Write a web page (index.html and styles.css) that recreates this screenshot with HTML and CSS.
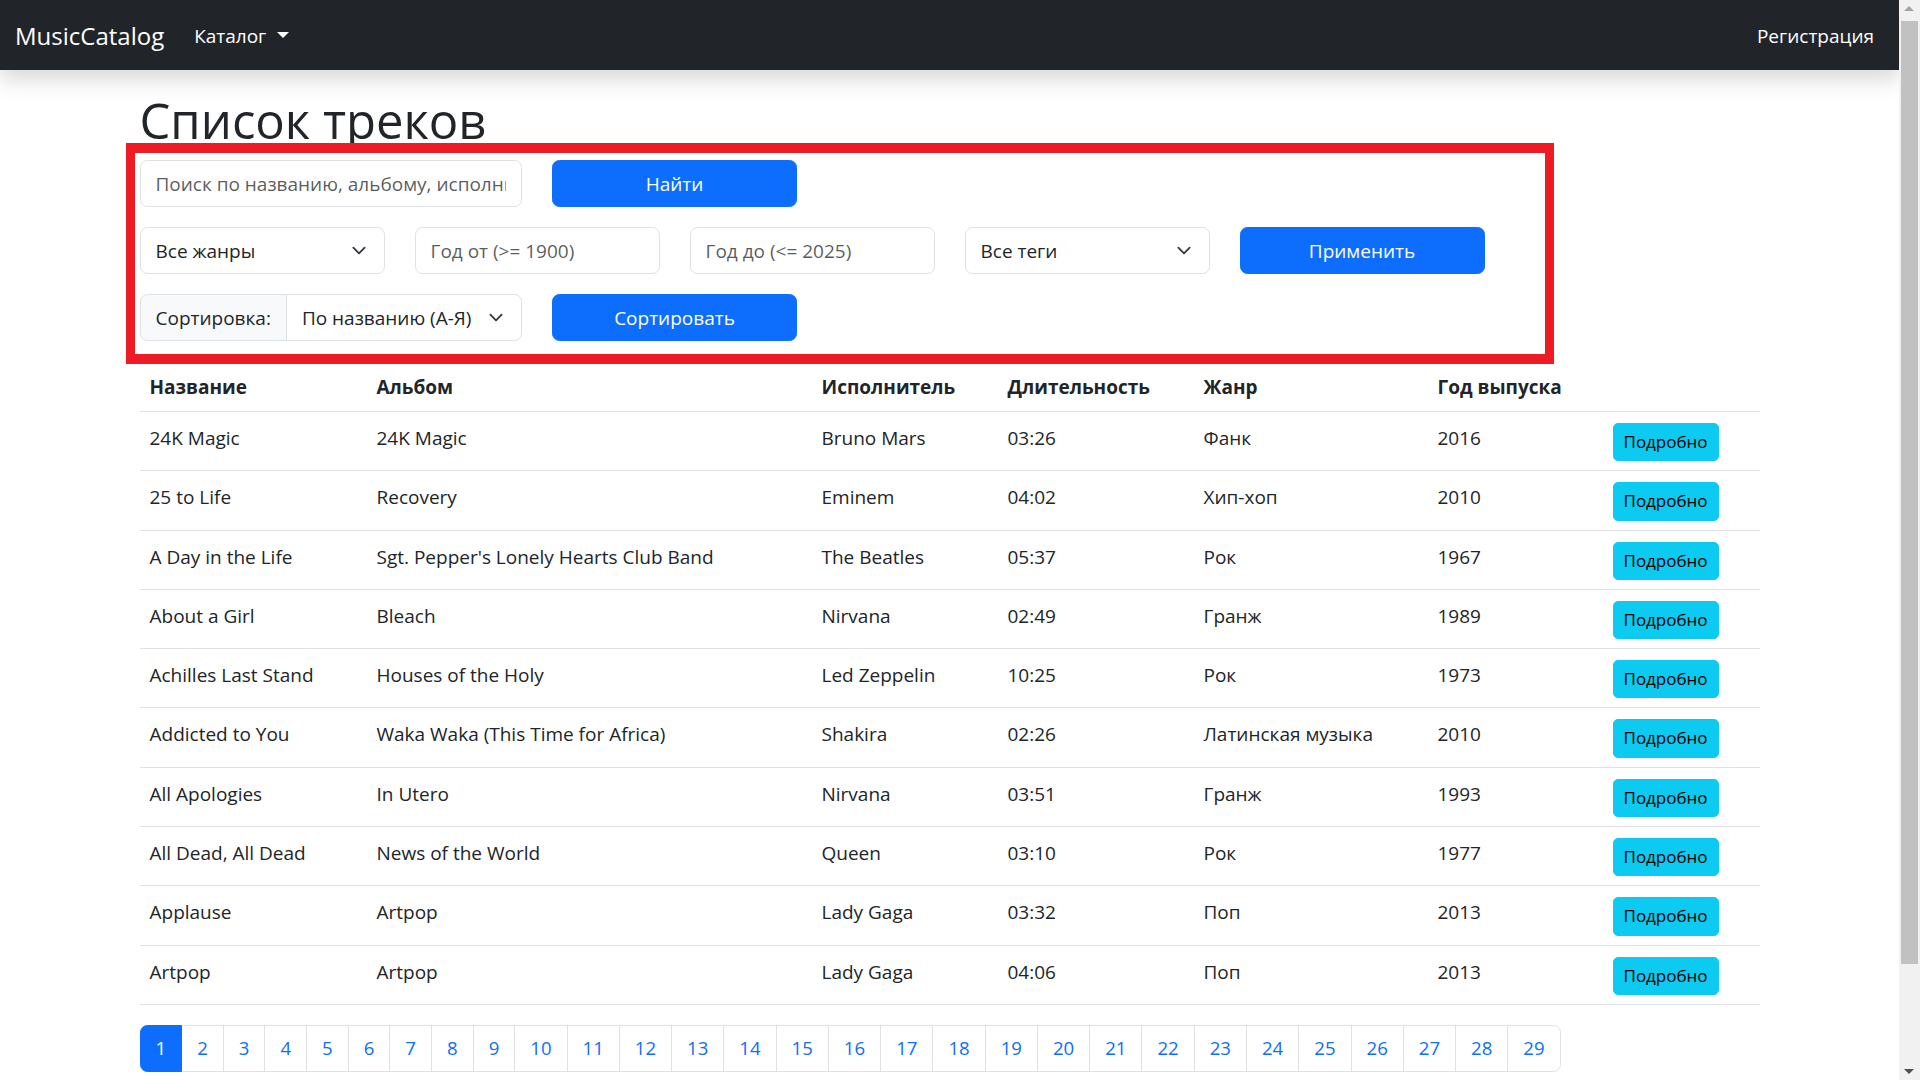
FILE: index.html
```html
<!DOCTYPE html>
<html lang="ru">
<head>
<meta charset="utf-8">
<title>Список треков - MusicCatalog</title>
<link rel="stylesheet" href="styles.css">
</head>
<body>
<nav class="navbar">
  <div class="navbar-inner">
    <a class="brand" href="#">MusicCatalog</a>
    <ul class="nav">
      <li><a class="nav-link dropdown-toggle" href="#">Каталог</a></li>
    </ul>
    <ul class="nav nav-right">
      <li><a class="nav-link" href="#">Регистрация</a></li>
    </ul>
  </div>
</nav>

<main class="container">
  <h1 class="page-title">Список треков</h1>

  <form class="filters">
    <div class="frow">
      <div class="span-3"><input class="form-control" type="text" placeholder="Поиск по названию, альбому, исполнителю..."></div>
      <div class="span-2"><button class="btn btn-primary" type="button">Найти</button></div>
    </div>
    <div class="frow">
      <div class="span-2">
        <div class="form-select"><span>Все жанры</span><svg class="chev" viewBox="0 0 16 16"><path d="m2 5 6 6 6-6"/></svg></div>
      </div>
      <div class="span-2"><input class="form-control" type="text" placeholder="Год от (>= 1900)"></div>
      <div class="span-2"><input class="form-control" type="text" placeholder="Год до (<= 2025)"></div>
      <div class="span-2">
        <div class="form-select"><span>Все теги</span><svg class="chev" viewBox="0 0 16 16"><path d="m2 5 6 6 6-6"/></svg></div>
      </div>
      <div class="span-2"><button class="btn btn-primary" type="button">Применить</button></div>
    </div>
    <div class="frow">
      <div class="span-3">
        <div class="input-group">
          <span class="input-group-text">Сортировка:</span>
          <div class="form-select grouped"><span>По названию (А-Я)</span><svg class="chev" viewBox="0 0 16 16"><path d="m2 5 6 6 6-6"/></svg></div>
        </div>
      </div>
      <div class="span-2"><button class="btn btn-primary" type="button">Сортировать</button></div>
    </div>
  </form>

  <table class="table">
    <colgroup>
      <col class="c-name"><col class="c-album"><col class="c-artist"><col class="c-dur"><col class="c-genre"><col class="c-year"><col class="c-act">
    </colgroup>
    <thead>
      <tr><th>Название</th><th>Альбом</th><th>Исполнитель</th><th>Длительность</th><th>Жанр</th><th>Год выпуска</th><th></th></tr>
    </thead>
    <tbody>
      <tr><td>24K Magic</td><td>24K Magic</td><td>Bruno Mars</td><td>03:26</td><td>Фанк</td><td>2016</td><td><a class="btn-sm" href="#">Подробно</a></td></tr>
      <tr><td>25 to Life</td><td>Recovery</td><td>Eminem</td><td>04:02</td><td>Хип-хоп</td><td>2010</td><td><a class="btn-sm" href="#">Подробно</a></td></tr>
      <tr><td>A Day in the Life</td><td>Sgt. Pepper's Lonely Hearts Club Band</td><td>The Beatles</td><td>05:37</td><td>Рок</td><td>1967</td><td><a class="btn-sm" href="#">Подробно</a></td></tr>
      <tr><td>About a Girl</td><td>Bleach</td><td>Nirvana</td><td>02:49</td><td>Гранж</td><td>1989</td><td><a class="btn-sm" href="#">Подробно</a></td></tr>
      <tr><td>Achilles Last Stand</td><td>Houses of the Holy</td><td>Led Zeppelin</td><td>10:25</td><td>Рок</td><td>1973</td><td><a class="btn-sm" href="#">Подробно</a></td></tr>
      <tr><td>Addicted to You</td><td>Waka Waka (This Time for Africa)</td><td>Shakira</td><td>02:26</td><td>Латинская музыка</td><td>2010</td><td><a class="btn-sm" href="#">Подробно</a></td></tr>
      <tr><td>All Apologies</td><td>In Utero</td><td>Nirvana</td><td>03:51</td><td>Гранж</td><td>1993</td><td><a class="btn-sm" href="#">Подробно</a></td></tr>
      <tr><td>All Dead, All Dead</td><td>News of the World</td><td>Queen</td><td>03:10</td><td>Рок</td><td>1977</td><td><a class="btn-sm" href="#">Подробно</a></td></tr>
      <tr><td>Applause</td><td>Artpop</td><td>Lady Gaga</td><td>03:32</td><td>Поп</td><td>2013</td><td><a class="btn-sm" href="#">Подробно</a></td></tr>
      <tr><td>Artpop</td><td>Artpop</td><td>Lady Gaga</td><td>04:06</td><td>Поп</td><td>2013</td><td><a class="btn-sm" href="#">Подробно</a></td></tr>
    </tbody>
  </table>

  <ul class="pagination">
    <li><a class="page-link active" href="#">1</a></li>
    <li><a class="page-link" href="#">2</a></li>
    <li><a class="page-link" href="#">3</a></li>
    <li><a class="page-link" href="#">4</a></li>
    <li><a class="page-link" href="#">5</a></li>
    <li><a class="page-link" href="#">6</a></li>
    <li><a class="page-link" href="#">7</a></li>
    <li><a class="page-link" href="#">8</a></li>
    <li><a class="page-link" href="#">9</a></li>
    <li><a class="page-link" href="#">10</a></li>
    <li><a class="page-link" href="#">11</a></li>
    <li><a class="page-link" href="#">12</a></li>
    <li><a class="page-link" href="#">13</a></li>
    <li><a class="page-link" href="#">14</a></li>
    <li><a class="page-link" href="#">15</a></li>
    <li><a class="page-link" href="#">16</a></li>
    <li><a class="page-link" href="#">17</a></li>
    <li><a class="page-link" href="#">18</a></li>
    <li><a class="page-link" href="#">19</a></li>
    <li><a class="page-link" href="#">20</a></li>
    <li><a class="page-link" href="#">21</a></li>
    <li><a class="page-link" href="#">22</a></li>
    <li><a class="page-link" href="#">23</a></li>
    <li><a class="page-link" href="#">24</a></li>
    <li><a class="page-link" href="#">25</a></li>
    <li><a class="page-link" href="#">26</a></li>
    <li><a class="page-link" href="#">27</a></li>
    <li><a class="page-link" href="#">28</a></li>
    <li><a class="page-link" href="#">29</a></li>
  </ul>
</main>

<div class="annotation"></div>

<div class="scrollbar">
  <span class="sb-arrow sb-up"></span>
  <span class="sb-thumb"></span>
  <span class="sb-arrow sb-down"></span>
</div>
</body>
</html>
```

FILE: styles.css
```css
* { box-sizing: border-box; }

html { overflow: hidden; }

body {
  margin: 0;
  padding-right: 21px;
  font-family: "Open Sans", "Noto Sans", "Liberation Sans", sans-serif;
  font-size: 19px;
  line-height: 30px;
  color: #212529;
  background: #fff;
}

a { text-decoration: none; }

/* Navbar */
.navbar {
  position: relative;
  z-index: 2;
  background: #212529;
  box-shadow: 0 10px 20px rgba(0, 0, 0, 0.15);
}
.navbar-inner {
  display: flex;
  align-items: center;
  height: 70px;
  padding: 0 15px;
}
.brand {
  color: #fff;
  font-size: 24px;
  line-height: 37.5px;
  margin-right: 20px;
  padding-top: 2px;
}
.nav {
  display: flex;
  list-style: none;
  margin: 0;
  padding: 0;
}
.nav-right { margin-left: auto; }
.nav-link {
  display: block;
  color: #fff;
  padding: 11px 10px 9px;
  font-size: 19px;
  line-height: 30px;
}
.dropdown-toggle::after {
  content: "";
  display: inline-block;
  margin-left: 11px;
  vertical-align: 5px;
  border-top: 6px solid #fff;
  border-right: 6px solid transparent;
  border-left: 6px solid transparent;
}

/* Container */
.container {
  width: 1620px;
  margin: 0 auto;
  padding-bottom: 120px;
}
.page-title {
  margin: 20px 0 10px;
  font-size: 49px;
  line-height: 60px;
  font-weight: 500;
}

/* Filters */
.filters { margin-bottom: 20px; }
.frow {
  display: grid;
  grid-template-columns: repeat(12, 1fr);
  column-gap: 30px;
  margin-bottom: 20px;
}
.frow:last-child { margin-bottom: 0; }
.span-3 { grid-column: span 3; }
.span-2 { grid-column: span 2; }

.form-control {
  display: block;
  width: 100%;
  height: 47px;
  padding: 7.5px 15px;
  font-family: inherit;
  font-size: 19px;
  line-height: 30px;
  color: #212529;
  background: #fff;
  border: 1px solid #dee2e6;
  border-radius: 7.5px;
  outline: none;
}
.form-control::placeholder { color: rgba(33, 37, 41, 0.75); }

.form-select {
  display: flex;
  align-items: center;
  justify-content: space-between;
  gap: 10px;
  height: 47px;
  padding: 7.5px 15px;
  border: 1px solid #dee2e6;
  border-radius: 7.5px;
  background: #fff;
  white-space: nowrap;
}
.chev {
  width: 20px;
  height: 15px;
  flex: none;
  fill: none;
  stroke: #343a40;
  stroke-width: 2;
  stroke-linecap: round;
  stroke-linejoin: round;
}

.input-group {
  display: flex;
  height: 47px;
}
.input-group-text {
  display: flex;
  align-items: center;
  padding: 7.5px 15px;
  background: #f8f9fa;
  border: 1px solid #dee2e6;
  border-radius: 7.5px 0 0 7.5px;
  white-space: nowrap;
}
.form-select.grouped {
  flex: 1;
  margin-left: -1px;
  border-radius: 0 7.5px 7.5px 0;
}

.btn {
  display: block;
  width: 100%;
  height: 47px;
  padding: 7.5px 15px;
  font-family: inherit;
  font-size: 19px;
  line-height: 30px;
  border: 1px solid transparent;
  border-radius: 7.5px;
  text-align: center;
  cursor: pointer;
}
.btn-primary {
  color: #fff;
  background: #0d6efd;
  border-color: #0d6efd;
}

/* Table */
.table {
  width: 100%;
  table-layout: fixed;
  border-collapse: collapse;
  margin-bottom: 20px;
}
.c-name { width: 227px; }
.c-album { width: 445px; }
.c-artist { width: 186px; }
.c-dur { width: 196px; }
.c-genre { width: 234px; }
.c-year { width: 175px; }
.c-act { width: 157px; }

.table th,
.table td {
  padding: 10px;
  text-align: left;
  vertical-align: top;
  border-bottom: 1px solid #dee2e6;
  white-space: nowrap;
}
.table th { font-weight: 700; padding-top: 11px; padding-bottom: 9px; }
.table td { padding-top: 11px; padding-bottom: 9px; }

.btn-sm {
  display: inline-block;
  padding: 5px 10px;
  font-size: 17px;
  line-height: 26.3px;
  color: #000;
  background: #0dcaf0;
  border: 1px solid #0dcaf0;
  border-radius: 5px;
  vertical-align: top;
}

/* Pagination */
.pagination {
  display: flex;
  list-style: none;
  margin: 0;
  padding: 0;
}
.page-link {
  display: block;
  padding: 7.5px 15px;
  font-size: 18.6px;
  line-height: 30px;
  color: #0d6efd;
  background: #fff;
  border: 1px solid #dee2e6;
}
.pagination li + li .page-link { margin-left: -1px; }
.pagination li:first-child .page-link { border-radius: 7.5px 0 0 7.5px; }
.pagination li:last-child .page-link { border-radius: 0 7.5px 7.5px 0; }
.page-link.active {
  position: relative;
  z-index: 1;
  color: #fff;
  background: #0d6efd;
  border-color: #0d6efd;
}

/* Red annotation frame drawn over the filters */
.annotation {
  position: absolute;
  left: 126px;
  top: 143px;
  width: 1428px;
  height: 221px;
  border-style: solid;
  border-color: #ed1c24;
  border-width: 10px 9px;
  pointer-events: none;
  z-index: 3;
}

/* Fake browser scrollbar */
.scrollbar {
  position: fixed;
  top: 0;
  right: 0;
  width: 21px;
  height: 100%;
  background: #f1f1f1;
  z-index: 4;
}
.sb-thumb {
  position: absolute;
  left: 2px;
  top: 21px;
  width: 17px;
  height: 943px;
  background: #c1c1c1;
}
.sb-arrow {
  position: absolute;
  left: 5px;
  width: 0;
  height: 0;
  border-left: 5.5px solid transparent;
  border-right: 5.5px solid transparent;
}
.sb-up {
  top: 6px;
  border-bottom: 5px solid #a3a3a3;
}
.sb-down {
  bottom: 6px;
  border-top: 5px solid #505050;
}
```
